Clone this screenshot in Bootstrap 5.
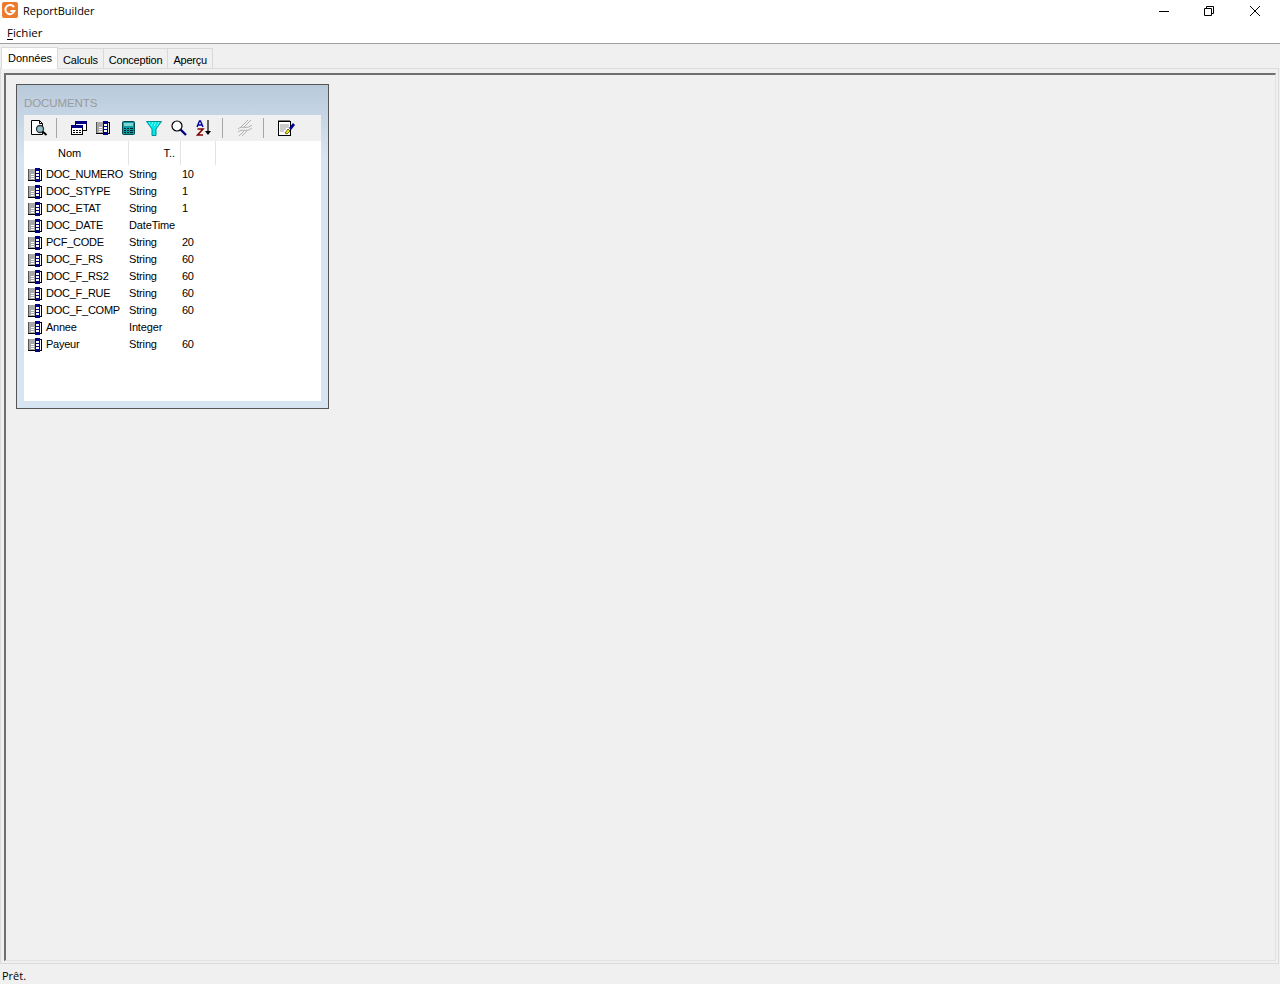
<!DOCTYPE html>
<html lang="fr">
<head>
<meta charset="utf-8">
<title>ReportBuilder</title>
<link rel="stylesheet" href="https://cdn.jsdelivr.net/npm/bootstrap@5.3.0/dist/css/bootstrap.min.css">
<style>
html,body{height:100%;overflow:hidden}
body{font-family:"Liberation Sans",Arial,sans-serif;font-size:11px;color:#000;background:#f0f0f0;line-height:17px}
svg{display:block;flex:none}
.appwin{width:1280px;height:984px}
.titlebar{height:22px;background:#fff}
.appicon{margin:2px 0 0 2px}
.apptitle{font-family:"Open Sans","Liberation Sans",sans-serif;font-size:11px;margin:2px 0 0 5px}
.winctl{width:46px;height:22px}
.winmin{width:44px}
.winlast{margin-right:2px}
.menubar{height:22px;background:#fff;border-bottom:1px solid #a0a0a0;font-family:"Open Sans","Liberation Sans",sans-serif;font-size:11.5px;padding:2px 0 0 7px}
.menubar u{text-underline-offset:2px}
.tabstrip{height:24px;padding:3px 0 0 1px;background:#f0f0f0;align-items:flex-end}
.tabx{height:20px;border:1px solid #d9d9d9;border-bottom:0;border-left-width:0;padding:3px 5px 0;color:#000;letter-spacing:-.2px}
.tabon{height:22px;margin-bottom:-1px;background:#fff;border-left-width:1px;border-color:#d9d9d9;padding:2px 5px 0 6px;position:relative;z-index:1;letter-spacing:0}
.pageframe{height:896px;background:#f0f0f0;border:1px solid #dcdcdc;margin:0 1px 0 0;padding:4px 2px 2px 3px}
.sunken{height:100%;border-top:2px solid #6f6f6f;border-left:2px solid #6f6f6f;border-right:1px solid #e3e3e3;border-bottom:1px solid #e3e3e3;padding:9px 0 0 10px}
.tablewin{width:313px;height:325px;border:1px solid #555;background:linear-gradient(#b9cadb,#d7e4f2 22%,#d7e4f2);padding:0 7px 7px 7px}
.wintitle{height:30px;color:#9a9a9a;padding-top:10px;font-size:11.5px;letter-spacing:-.1px}
.toolrow{height:26px;background:#f0f0f0;padding:0 0 0 2px}
.toolbtn{width:25px;display:flex;justify-content:center;align-items:center;height:100%}
.toolsep{width:1px;height:20px;background:#a6a6a6;margin:0 9px 0 5px}
.sepmid{margin:0 10px 0 6px}
.seplast{margin:0 10px 0 5px}
.gridbox{height:260px;background:#fff}
.headrow{height:24px;line-height:24px;margin-bottom:1px}
.hcell{height:24px;border-right:1px solid #e3e3e3}
.cname{width:105px;padding-left:34px}
.ctype{width:52px;text-align:right;padding-right:5px}
.csize{width:35px}
.datarow{height:17px;line-height:17px;letter-spacing:-.25px}
.dname{width:105px;padding-left:4px;gap:3px;white-space:nowrap}
.dtype{width:53px;white-space:nowrap;letter-spacing:-.15px}
.statusline{height:20px;padding:3px 0 0 2px;background:#f0f0f0;font-family:"Open Sans","Liberation Sans",sans-serif}
</style>
</head>
<body>
<svg width="0" height="0" class="position-absolute" aria-hidden="true">
  <symbol id="fieldicon" viewBox="0 0 15 14">
    <rect x="0" y="1" width="7" height="12" fill="#a8a8a8"/>
    <rect x="0" y="1" width="1" height="12" fill="#555"/>
    <rect x="0" y="12" width="7" height="1" fill="#000"/>
    <path d="M3 6h3v1H3zM3 8h3v1H3zM3 10h3v1H3z" fill="#fff"/>
    <rect x="7" y="0" width="5" height="14" fill="#000080"/>
    <path d="M8 3h3v2H8zM8 6h3v2H8zM8 9h3v2H8z" fill="#fff"/>
    <path d="M12 1h2v12h-2v-1h1V2h-1z" fill="#000"/>
  </symbol>
</svg>
<div class="appwin d-flex flex-column">
  <div class="titlebar d-flex">
    <svg class="appicon" width="16" height="16" viewBox="0 0 16 16"><rect width="16" height="16" rx="2" fill="#ee7a2c"/><path d="M12 5.200A4.600 4.600 0 1 0 12.400 9H8.400" fill="none" stroke="#fff" stroke-width="2"/></svg>
    <div class="apptitle flex-grow-1">ReportBuilder</div>
    <div class="winctl winmin d-flex justify-content-center align-items-center"><svg width="10" height="10" viewBox="0 0 10 10"><path d="M0 5.500H10" stroke="#000"/></svg></div>
    <div class="winctl d-flex justify-content-center align-items-center"><svg width="10" height="10" viewBox="0 0 10 10"><path d="M.5 2.500h7v7h-7zM2.500 2.500v-2h7v7h-2" fill="none" stroke="#000"/></svg></div>
    <div class="winctl winlast d-flex justify-content-center align-items-center"><svg width="10" height="10" viewBox="0 0 10 10"><path d="M0 0L10 10M10 0L0 10" stroke="#000"/></svg></div>
  </div>
  <div class="menubar"><u>F</u>ichier</div>
  <div class="tabstrip d-flex">
    <div class="tabx tabon">Données</div>
    <div class="tabx">Calculs</div>
    <div class="tabx">Conception</div>
    <div class="tabx">Aperçu</div>
  </div>
  <div class="pageframe">
    <div class="sunken">
      <div class="tablewin d-flex flex-column">
        <div class="wintitle">DOCUMENTS</div>
        <div class="toolrow d-flex align-items-center">
          <div class="toolbtn"><svg width="18" height="16" viewBox="0 0 18 16"><path d="M1.500.5h8l3 3v11h-11z" fill="#fff" stroke="#000"/><path d="M9.500.5v3h3" fill="none" stroke="#000"/><circle cx="10" cy="9" r="3.500" fill="#8fc4cc" stroke="#333" stroke-width="1.300"/><path d="M12.500 11.500l4 3.500" stroke="#000" stroke-width="2"/></svg></div>
          <div class="toolsep"></div>
          <div class="toolbtn"><svg width="16" height="14" viewBox="0 0 16 14"><rect x="4.500" y=".5" width="11" height="9" fill="#fff" stroke="#000"/><rect x="4" y="0" width="12" height="3" fill="#000080"/><rect x=".5" y="4.500" width="11" height="9" fill="#fff" stroke="#000"/><rect x="0" y="4" width="12" height="3" fill="#000080"/><path d="M2 9h2v1H2zM5 9h2v1H5zM8 9h2v1H8zM2 11h2v1H2zM5 11h2v1H5zM8 11h2v1H8z" fill="#000"/></svg></div>
          <div class="toolbtn"><svg width="15" height="14"><use href="#fieldicon"/></svg></div>
          <div class="toolbtn"><svg width="13" height="14" viewBox="0 0 13 14"><rect x=".5" y=".5" width="12" height="13" rx="1" fill="#0e9a9e" stroke="#004a50"/><rect x="2" y="2" width="9" height="3" fill="#7fd6d8"/><path d="M2 7h2v1H2zM5 7h2v1H5zM8 7h3v1H8zM2 9h2v1H2zM5 9h2v1H5zM8 9h3v1H8zM2 11h2v1H2zM5 11h2v1H5zM8 11h3v1H8z" fill="#00252a"/></svg></div>
          <div class="toolbtn"><svg width="16" height="15" viewBox="0 0 16 15"><path d="M.5.5h15L10 8v6.500H6V8z" fill="#00e8e8" stroke="#008f8f"/><path d="M3 2h1M6 2h1M9 2h1M12 2h1M5 4h1M8 4h1M11 4h1" stroke="#e0ffff"/></svg></div>
          <div class="toolbtn"><svg width="16" height="16" viewBox="0 0 16 16"><circle cx="6" cy="6" r="5" fill="#fff" stroke="#000" stroke-width="1.200"/><path d="M9.500 9.500l5.500 5.500" stroke="#000080" stroke-width="2.400"/></svg></div>
          <div class="toolbtn"><svg width="16" height="16" viewBox="0 0 16 16"><path d="M1 7L3.500 1h1L7 7M2 5h4" fill="none" stroke="#0000a0" stroke-width="1.400"/><path d="M1.500 9H7L1.500 15H7" fill="none" stroke="#800000" stroke-width="1.600"/><path d="M12 0v12" stroke="#000" stroke-width="1.200"/><path d="M9 11h6l-3 4z" fill="#000"/></svg></div>
          <div class="toolsep sepmid"></div>
          <div class="toolbtn"><svg width="17" height="16" viewBox="0 0 17 16"><path d="M4 7L11 0M7 7L14 0M1 9c4-4 8 1 14-4M1 12c4-4 8 1 14-4M2 16L7 11M5 16L10 11" fill="none" stroke="#b0b0b0"/></svg></div>
          <div class="toolsep seplast"></div>
          <div class="toolbtn"><svg width="17" height="16" viewBox="0 0 17 16"><rect x=".5" y="1.500" width="12" height="14" fill="#fff" stroke="#000"/><path d="M1 1V0M3 1V0M5 1V0M7 1V0M9 1V0M11 1V0" stroke="#000"/><path d="M2 5h9M2 7h9M2 9h6M2 11h4" stroke="#999"/><path d="M7 13l3-4 2 2-3 3z" fill="#ffe600" stroke="#000" stroke-width=".6"/><path d="M11 8l4-5 2 2-4 5z" fill="#000090"/></svg></div>
        </div>
        <div class="gridbox">
          <div class="headrow d-flex">
            <div class="hcell cname">Nom</div>
            <div class="hcell ctype">T..</div>
            <div class="hcell csize"></div>
          </div>
          <div class="d-flex datarow"><div class="dname d-flex align-items-center"><svg width="15" height="14"><use href="#fieldicon"/></svg>DOC_NUMERO</div><div class="dtype">String</div><div class="dsize">10</div></div>
          <div class="d-flex datarow"><div class="dname d-flex align-items-center"><svg width="15" height="14"><use href="#fieldicon"/></svg>DOC_STYPE</div><div class="dtype">String</div><div class="dsize">1</div></div>
          <div class="d-flex datarow"><div class="dname d-flex align-items-center"><svg width="15" height="14"><use href="#fieldicon"/></svg>DOC_ETAT</div><div class="dtype">String</div><div class="dsize">1</div></div>
          <div class="d-flex datarow"><div class="dname d-flex align-items-center"><svg width="15" height="14"><use href="#fieldicon"/></svg>DOC_DATE</div><div class="dtype">DateTime</div><div class="dsize"></div></div>
          <div class="d-flex datarow"><div class="dname d-flex align-items-center"><svg width="15" height="14"><use href="#fieldicon"/></svg>PCF_CODE</div><div class="dtype">String</div><div class="dsize">20</div></div>
          <div class="d-flex datarow"><div class="dname d-flex align-items-center"><svg width="15" height="14"><use href="#fieldicon"/></svg>DOC_F_RS</div><div class="dtype">String</div><div class="dsize">60</div></div>
          <div class="d-flex datarow"><div class="dname d-flex align-items-center"><svg width="15" height="14"><use href="#fieldicon"/></svg>DOC_F_RS2</div><div class="dtype">String</div><div class="dsize">60</div></div>
          <div class="d-flex datarow"><div class="dname d-flex align-items-center"><svg width="15" height="14"><use href="#fieldicon"/></svg>DOC_F_RUE</div><div class="dtype">String</div><div class="dsize">60</div></div>
          <div class="d-flex datarow"><div class="dname d-flex align-items-center"><svg width="15" height="14"><use href="#fieldicon"/></svg>DOC_F_COMP</div><div class="dtype">String</div><div class="dsize">60</div></div>
          <div class="d-flex datarow"><div class="dname d-flex align-items-center"><svg width="15" height="14"><use href="#fieldicon"/></svg>Annee</div><div class="dtype">Integer</div><div class="dsize"></div></div>
          <div class="d-flex datarow"><div class="dname d-flex align-items-center"><svg width="15" height="14"><use href="#fieldicon"/></svg>Payeur</div><div class="dtype">String</div><div class="dsize">60</div></div>
        </div>
      </div>
    </div>
  </div>
  <div class="statusline">Prêt.</div>
</div>
</body>
</html>
